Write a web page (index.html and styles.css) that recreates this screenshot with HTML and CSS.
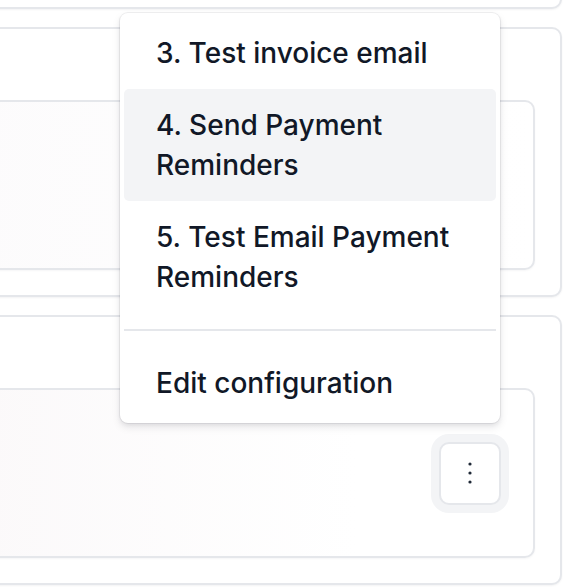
FILE: index.html
```html
<!DOCTYPE html>
<html>
<head>
<meta charset="utf-8">
<link rel="stylesheet" href="styles.css">
</head>
<body>
<div class="stack">
  <div class="card card-top"></div>
  <div class="card">
    <div class="panel"></div>
  </div>
  <div class="card">
    <div class="panel panel-tinted">
      <button class="kebab" aria-label="More options">
        <svg width="6" height="24" viewBox="0 0 6 24"><circle cx="3" cy="3" r="1.6" fill="#1f2937"/><circle cx="3" cy="12" r="1.6" fill="#1f2937"/><circle cx="3" cy="21" r="1.6" fill="#1f2937"/></svg>
      </button>
    </div>
  </div>
</div>
<div class="menu" role="menu">
  <div class="menu-item">3. Test invoice email</div>
  <div class="menu-item active">4. Send Payment Reminders</div>
  <div class="menu-item">5. Test Email Payment Reminders</div>
  <div class="menu-divider"></div>
  <div class="menu-item">Edit configuration</div>
</div>
</body>
</html>
```
FILE: styles.css
```css
html, body {
  margin: 0;
  padding: 0;
  background: #ffffff;
  width: 568px;
  height: 588px;
  overflow: hidden;
  font-family: Inter, "Noto Sans", sans-serif;
}

.stack {
  display: flex;
  flex-direction: column;
  gap: 18px;
  margin: -100px 6px 0 -80px;
}

.card {
  box-sizing: border-box;
  height: 270px;
  border: 2px solid #e5e7eb;
  border-radius: 10px;
  background: #ffffff;
  box-shadow: 0 1px 2px rgba(16, 24, 40, 0.05);
  padding: 71px 25px 25px 25px;
  display: flex;
}

.card-top {
  height: 109px;
}

.panel {
  flex: 1;
  border: 2px solid #e5e7eb;
  border-radius: 10px;
  background: linear-gradient(to right, #fcfbfc, #ffffff);
  box-shadow: 0 1px 2px rgba(16, 24, 40, 0.04);
}

.panel-tinted {
  display: flex;
  align-items: center;
  justify-content: flex-end;
  padding-right: 32px;
  background: linear-gradient(to right, #fbf9fa 5%, #ffffff 70%);
}

.kebab {
  box-sizing: border-box;
  width: 62px;
  height: 63px;
  border: 2px solid #e5e7eb;
  border-radius: 10px;
  background: #ffffff;
  box-shadow: 0 0 0 8px #f3f4f6;
  display: flex;
  align-items: center;
  justify-content: center;
  padding: 0;
}

.menu {
  position: absolute;
  left: 120px;
  top: 13px;
  width: 380px;
  box-sizing: border-box;
  padding: 4px;
  background: #ffffff;
  border-radius: 8px;
  box-shadow: 0 0 0 1px rgba(17, 24, 39, 0.06), 0 4px 8px rgba(17, 24, 39, 0.1), 0 2px 4px rgba(17, 24, 39, 0.06);
}

.menu-item {
  padding: 16px 32px;
  font-size: 28px;
  font-weight: 500;
  line-height: 40px;
  color: #111827;
  border-radius: 5px;
}

.menu-item.active {
  background: #f3f4f6;
}

.menu-divider {
  height: 2px;
  background: #e5e7eb;
  margin: 16px 0;
}
```
